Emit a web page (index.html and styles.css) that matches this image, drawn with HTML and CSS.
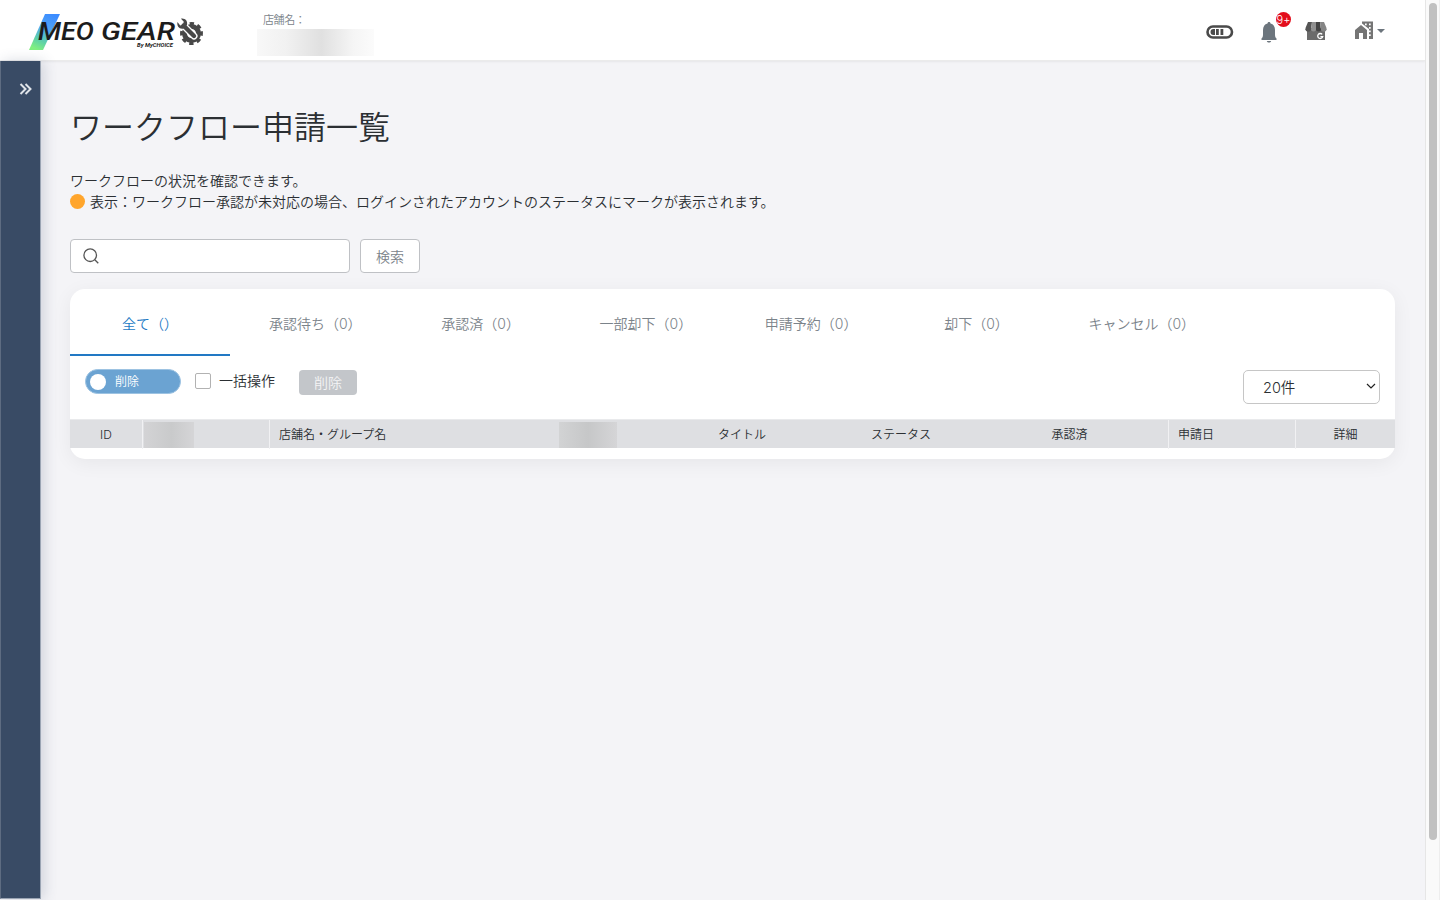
FILE: index.html
```html
<!DOCTYPE html>
<html lang="ja">
<head>
<meta charset="utf-8">
<title>ワークフロー申請一覧</title>
<link rel="stylesheet" href="styles.css">
</head>
<body>
<div class="app">
  <div class="page">
    <header class="header">
      <svg class="logo" width="180" height="40" viewBox="0 0 180 40" role="img" aria-label="MEO GEAR">
        <defs><linearGradient id="slash" x1="0.7" y1="0" x2="0.3" y2="1"><stop offset="0" stop-color="#3c8cff"/><stop offset=".4" stop-color="#4fa5f5"/><stop offset=".75" stop-color="#5dd0a8"/><stop offset="1" stop-color="#80f080"/></linearGradient></defs>
        <path d="M17 4h15L15 40H1z" fill="url(#slash)"/>
        <text class="logo-word" x="10" y="30" textLength="56" lengthAdjust="spacingAndGlyphs">MEO</text>
        <text class="logo-word" x="73" y="30" textLength="74" lengthAdjust="spacingAndGlyphs">GEAR</text>
        <text class="logo-sub" x="109" y="37" textLength="36" lengthAdjust="spacingAndGlyphs">By MyCHOICE</text>
        <g transform="translate(163.500 23.500)">
          <circle r="7" fill="none" stroke="#484848" stroke-width="5"/>
          <circle r="9.900" fill="none" stroke="#484848" stroke-width="3.200" stroke-dasharray="4.200 3.575" transform="rotate(-12)"/>
          <path d="M-9-9L2.500 2.500" stroke="#fff" stroke-width="7" stroke-linecap="round"/>
          <path d="M-8-8L2.500 2.500" stroke="#484848" stroke-width="4.400" stroke-linecap="round"/>
          <path d="M-14-11.500c-1 4 2 7.500 6 6.500l3.500-3.500c1-4-2-7-6-6.300l2.800 3-1 3-2.600.8z" fill="#484848"/>
        </g>
      </svg>
      <div class="store">
        <span class="store-label">店舗名：</span>
        <span class="store-name"></span>
      </div>
      <nav class="tools">
        <svg class="tool-battery" width="28" height="14" viewBox="0 0 28 14"><rect x="1.500" y="1.500" width="24.500" height="11" rx="5.500" fill="#fff" stroke="#4a4a4a" stroke-width="2.600"/><path d="M7.500 4H9v6H7.500a3 3 0 010-6zM10 4h2.800v6H10zM14.500 4h2.800v6h-2.800z" fill="#4a4a4a"/></svg>
        <span class="bell">
          <svg width="16" height="21" viewBox="0 0 16 21"><path d="M8 0c1 0 1.500.7 1.500 1.600C12.500 2.300 14 5 14 8v4.500c0 2 .4 3 1.500 4V18H.5v-1.500c1.100-1 1.500-2 1.500-4V8c0-3 1.500-5.700 4.500-6.400C6.500.7 7 0 8 0zM5.800 19h4.400c-.4 1-1.200 1.500-2.200 1.500S6.200 20 5.800 19z" fill="#6c757d"/></svg>
          <span class="badge">9+</span>
        </span>
        <svg class="tool-shop" width="22" height="20" viewBox="0 0 22 20"><path d="M2 7h18v12H2z" fill="#6b6b6b"/><path d="M3 1h4L6 9H.5V7z" fill="#555"/><path d="M7 1h4v8H6z" fill="#909090"/><path d="M11 1h4l1 8h-5z" fill="#444"/><path d="M15 1h4l2.500 6v2H16z" fill="#858585"/><path d="M.5 8a2.700 2.700 0 005.500 0z" fill="#555"/><path d="M6 8a2.500 2.500 0 005 0z" fill="#909090"/><path d="M11 8a2.500 2.500 0 005 0z" fill="#444"/><path d="M16 8a2.700 2.700 0 005.500 0z" fill="#858585"/><path d="M17.200 13.400a2.500 2.500 0 10.500 2.200h-2.300" fill="none" stroke="#fff" stroke-width="1.300"/></svg>
        <span class="company">
          <svg width="19" height="19" viewBox="0 0 19 19"><path d="M1 9l6-5 6 5v9H9v-6H5v6H1z" fill="#757575"/><path fill-rule="evenodd" d="M8 .5h11V18h-4V8L8 2.500zM11 2.500v1.700h1.700V2.500zm4 0v1.700h1.700V2.500zM15 6v1.700h1.700V6zm0 3.600v1.700h1.700V9.600zm0 3.600v1.700h1.700v-1.700z" fill="#757575"/></svg>
          <i class="caret"></i>
        </span>
      </nav>
    </header>
    <div class="body">
      <aside class="sidebar">
        <svg width="13" height="12" viewBox="0 0 13 12"><path d="M1.500 1l5 5-5 5M6.500 1l5 5-5 5" fill="none" stroke="#dfe3e8" stroke-width="2"/></svg>
      </aside>
      <main class="content">
        <h1 class="title">ワークフロー申請一覧</h1>
        <div class="lead">
          <p>ワークフローの状況を確認できます。</p>
          <p><i class="dot"></i>表示：ワークフロー承認が未対応の場合、ログインされたアカウントのステータスにマークが表示されます。</p>
        </div>
        <div class="search">
          <div class="search-box"><svg width="16" height="16" viewBox="0 0 16 16"><circle cx="7.200" cy="7.200" r="6.300" fill="none" stroke="#555" stroke-width="1.300"/><path d="M11.800 11.800l3.500 3.500" stroke="#555" stroke-width="1.300"/></svg></div>
          <button class="search-button">検索</button>
        </div>
        <section class="card">
          <div class="tabs">
            <span class="tab tab-active">全て（）</span>
            <span class="tab">承認待ち（0）</span>
            <span class="tab">承認済（0）</span>
            <span class="tab">一部却下（0）</span>
            <span class="tab">申請予約（0）</span>
            <span class="tab">却下（0）</span>
            <span class="tab">キャンセル（0）</span>
          </div>
          <div class="controls">
            <span class="toggle"><i class="knob"></i>削除</span>
            <span class="check"><i class="box"></i>一括操作</span>
            <button class="delete">削除</button>
            <div class="select">20件<svg width="10" height="7" viewBox="0 0 10 7"><path d="M1 1l4 4 4-4" fill="none" stroke="#222" stroke-width="1.200"/></svg></div>
          </div>
          <div class="thead">
            <span>ID</span>
            <span class="line left"><i class="mask mask-a"></i></span>
            <span class="line left pad">店舗名・グループ名</span>
            <span><i class="mask mask-b"></i></span>
            <span>タイトル</span>
            <span>ステータス</span>
            <span class="approved">承認済</span>
            <span class="line left pad">申請日</span>
            <span class="line">詳細</span>
          </div>
        </section>
      </main>
    </div>
  </div>
  <div class="scroll"><div class="thumb"></div></div>
</div>
</body>
</html>
```
FILE: styles.css
```css
* { box-sizing: border-box; }
body { margin: 0; font-family: Inter, "Noto Sans CJK JP", sans-serif; font-weight: 350; color: #2b2f33; font-size: 14px; }
p, h1 { margin: 0; }
i { display: block; font-style: normal; }
svg { display: block; flex: none; }
button { font: inherit; padding: 0; }
.app { display: flex; height: 900px; overflow: hidden; background: #f4f4f7; }
.page { flex: 1; display: flex; flex-direction: column; }
.header { height: 61px; flex: none; display: flex; background: #fff; border-bottom: 1px solid #ebebeb; box-shadow: 0 1px 2px rgba(0,0,0,.06); padding: 0 40px 0 28px; }
.logo { margin-top: 10px; }
.logo-word { font: italic 500 26.500px Roboto, sans-serif; fill: #1c1c1c; }
.logo-sub { font: italic 700 6px Roboto, sans-serif; fill: #222; }
.store { margin-left: 49px; padding-top: 12px; display: flex; flex-direction: column; }
.store-label { font-size: 11px; line-height: 16px; padding-left: 6px; color: #7b838a; letter-spacing: -.4px; }
.store-name { width: 117px; height: 27px; margin-top: 1px; background: linear-gradient(90deg, #f8f8f8, #f1f1f1 25%, #e0e0e0 55%, #f5f5f5 82%, #fbfbfb); }
.tools { margin-left: auto; display: flex; align-items: flex-start; }
.tool-battery { margin-top: 25px; }
.bell { position: relative; margin: 22px 0 0 27px; }
.badge { position: absolute; left: 15px; top: -10px; width: 15px; height: 15px; border-radius: 50%; background: #e30d1c; color: #fff; font-size: 11px; line-height: 16px; display: flex; justify-content: center; }
.tool-shop { margin: 21px 0 0 28px; }
.company { display: flex; align-items: center; gap: 4px; margin: 21px 0 0 27px; }
.caret { border: 4px solid transparent; border-top-color: #6c757d; border-bottom: 0; }
.body { flex: 1; display: flex; }
.sidebar { width: 41px; height: 838px; background: #394b65; border: 1px solid #9aa4b3; border-top: 0; border-left-color: #5e6c81; box-shadow: 3px 0 14px rgba(60,75,110,.2); padding: 22px 0 0 17.500px; }
.content { flex: 1; padding: 47px 30px 0 29px; }
.title { font-size: 32px; line-height: 40px; font-weight: 350; }
.lead { margin-top: 22px; line-height: 21px; }
.lead p { display: flex; align-items: center; }
.dot { width: 15px; height: 15px; border-radius: 50%; background: #ffa52c; margin-right: 5px; }
.search { display: flex; gap: 10px; margin-top: 27px; }
.search-box { width: 280px; height: 34px; background: #fff; border: 1px solid #bfc1c5; border-radius: 4px; padding: 8px 12px; }
.search-button { width: 60px; height: 34px; background: #fff; border: 1px solid #bfc1c5; border-radius: 4px; color: #7b838a; line-height: 33px; }
.card { height: 170px; margin-top: 16px; background: #fff; border-radius: 15px; box-shadow: 0 4px 20px rgba(0,0,0,.06); }
.tabs { display: flex; gap: 5.300px; height: 67px; }
.tab { width: 160px; line-height: 70px; text-align: center; color: #7b838a; white-space: nowrap; }
.tab-active { color: #2279c4; border-bottom: 2px solid #2279c4; }
.controls { display: flex; align-items: flex-start; height: 63px; padding: 13px 15px 0; }
.toggle { width: 96px; height: 25px; border-radius: 13px; background: #6ba3d2; border: 1px solid #9dc3e2; color: #fff; font-size: 12px; display: flex; align-items: center; padding-left: 4px; gap: 9px; line-height: 22px; }
.knob { width: 16px; height: 16px; background: #fff; border-radius: 50%; }
.check { display: flex; align-items: center; gap: 8px; margin-left: 14px; line-height: 23px; }
.box { width: 16px; height: 16px; border: 1px solid #b2b2b2; border-radius: 2px; margin-top: 1px; }
.delete { width: 58px; height: 25px; margin: 1px 0 0 24px; border: 0; border-radius: 4px; background: #c3c6ca; color: #f4f4f5; line-height: 25px; }
.select { width: 137px; height: 34px; margin: 1px 0 0 auto; display: flex; align-items: center; justify-content: space-between; border: 1px solid #c6c6c6; border-radius: 5px; padding: 0 3px 2px 19px; font-size: 14.500px; }
.thead { display: grid; grid-template-columns: 72px 127px 256px 126px 182px 136px 199px 127px 100px; height: 29px; background: #dedfe2; border-top: 1px solid #e9eaec; font-size: 12px; line-height: 29px; text-align: center; }
.line { border-left: 1px solid #f1f1f3; }
.left { text-align: left; }
.pad { padding-left: 9px; }
.approved { padding-left: 2px; }
.mask { height: 26px; margin-top: 2px; }
.mask-a { width: 50px; margin-left: 1px; background: linear-gradient(90deg, #d3d3d5, #c9cacb 55%, #d5d5d7); }
.mask-b { width: 58px; margin-left: 34px; background: linear-gradient(90deg, #d2d3d4, #c6c7c8 50%, #d5d5d7); }
.scroll { width: 15px; background: #fafafa; border-left: 1px solid #e6e6e6; border-right: 1px solid #eee; padding: 3px 2px 0 3px; }
.thumb { width: 8px; height: 837px; border-radius: 4px; background: #c1c1c1; }
```
